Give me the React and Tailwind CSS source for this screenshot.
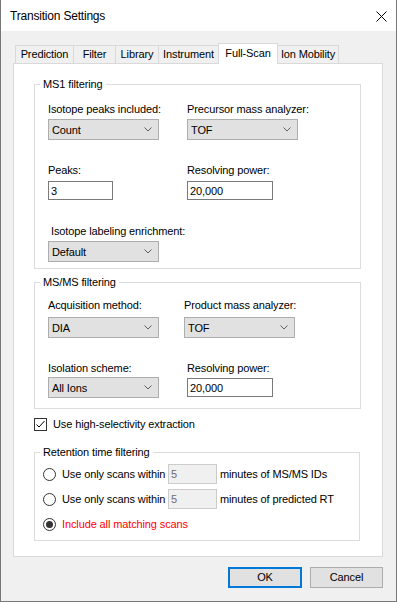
import React from "react";

function Chevron() {
  return (
    <svg width="8" height="5" viewBox="0 0 8 5" className="shrink-0">
      <polyline points="0.5,0.5 4,4 7.5,0.5" fill="none" stroke="#606060" strokeWidth="1" />
    </svg>
  );
}

function Combo({ value, w = "w-[111px]" }) {
  return (
    <div className={`${w} h-[21px] bg-[#e1e1e1] border border-[#adadad] flex items-center justify-between pl-[3px] pr-[6px]`}>
      <span className="leading-[14px]">{value}</span>
      <Chevron />
    </div>
  );
}

function TextBox({ value, w }) {
  return (
    <div className={`${w} h-[19px] bg-white border border-[#7a7a7a] flex items-center pl-[2px]`}>
      <span className="leading-[14px]">{value}</span>
    </div>
  );
}

function Label({ children, className = "" }) {
  return <div className={`h-[14px] leading-[14px] whitespace-nowrap ${className}`}>{children}</div>;
}

function Radio({ checked }) {
  return (
    <div className="w-[13px] h-[13px] rounded-full border border-[#333333] bg-white flex items-center justify-center shrink-0">
      {checked && <div className="w-[7px] h-[7px] rounded-full bg-[#333333]" />}
    </div>
  );
}

function Legend({ children }) {
  return <legend className="ml-[5px] px-[3px] h-[14px] leading-[14px]">{children}</legend>;
}

function Tab({ label, w, selected, last }) {
  if (selected) {
    return (
      <div className={`${w} h-[21px] -mb-px relative z-10 bg-white border-x border-t border-[#d9d9d9] flex items-center justify-center pb-[2px]`}>
        {label}
      </div>
    );
  }
  return (
    <div className={`${w} h-[18px] bg-[#f0f0f0] border-t ${last ? "border-r" : "border-l"} border-[#d9d9d9] flex items-center justify-center`}>
      {label}
    </div>
  );
}

export default function App() {
  return (
    <div className="w-[397px] h-[602px] bg-[#f0f0f0] border-x border-b border-[#777777] flex flex-col font-['Liberation_Sans',Arial,sans-serif] text-[11px] tracking-[-0.12px] text-black overflow-hidden">
      {/* Title bar */}
      <div className="h-[31px] bg-white flex items-center justify-between pl-[9px] pr-[9px] shrink-0">
        <span className="text-[12px] leading-[16px] mt-[1px] tracking-[-0.2px]">Transition Settings</span>
        <svg width="11" height="11" viewBox="0 0 11 11" className="mt-[1px]">
          <line x1="0.5" y1="0.5" x2="10.5" y2="10.5" stroke="#000" strokeWidth="1" />
          <line x1="10.5" y1="0.5" x2="0.5" y2="10.5" stroke="#000" strokeWidth="1" />
        </svg>
      </div>

      {/* Body */}
      <div className="pl-[12px] flex flex-col">
        {/* Tabs */}
        <div className="mt-[12px] ml-[2px] h-[20px] flex items-end">
          <Tab label="Prediction" w="w-[58px]" />
          <Tab label="Filter" w="w-[42px]" />
          <Tab label="Library" w="w-[43px]" />
          <Tab label="Instrument" w="w-[60px]" />
          <Tab label="Full-Scan" w="w-[60px]" selected />
          <Tab label="Ion Mobility" w="w-[61px]" last />
        </div>

        {/* Panel */}
        <div className="w-[370px] h-[494px] bg-white border border-[#d9d9d9] pl-[20px] pt-[13px] flex flex-col">
          {/* MS1 filtering */}
          <fieldset className="w-[327px] h-[192px] border border-[#dcdcdc]">
            <Legend>MS1 filtering</Legend>
            <div className="pl-[13px] pt-[11px] flex flex-col">
              <div className="flex">
                <div className="w-[139px] flex flex-col">
                  <Label>Isotope peaks included:</Label>
                  <div className="mt-[3px]"><Combo value="Count" /></div>
                </div>
                <div className="flex flex-col">
                  <Label>Precursor mass analyzer:</Label>
                  <div className="mt-[3px]"><Combo value="TOF" /></div>
                </div>
              </div>
              <div className="flex mt-[23px]">
                <div className="w-[139px] flex flex-col">
                  <Label>Peaks:</Label>
                  <div className="mt-[4px]"><TextBox value="3" w="w-[65px]" /></div>
                </div>
                <div className="flex flex-col">
                  <Label>Resolving power:</Label>
                  <div className="mt-[4px]"><TextBox value="20,000" w="w-[86px]" /></div>
                </div>
              </div>
              <div className="flex flex-col mt-[24px]">
                <Label className="ml-[3px]">Isotope labeling enrichment:</Label>
                <div className="mt-[3px]"><Combo value="Default" /></div>
              </div>
            </div>
          </fieldset>

          {/* MS/MS filtering */}
          <fieldset className="mt-[6px] w-[327px] h-[134px] border border-[#dcdcdc]">
            <Legend>MS/MS filtering</Legend>
            <div className="pl-[13px] pt-[9px] flex flex-col">
              <div className="flex">
                <div className="w-[136px] flex flex-col">
                  <Label>Acquisition method:</Label>
                  <div className="mt-[5px]"><Combo value="DIA" /></div>
                </div>
                <div className="flex flex-col">
                  <Label>Product mass analyzer:</Label>
                  <div className="mt-[5px]"><Combo value="TOF" /></div>
                </div>
              </div>
              <div className="flex mt-[23px]">
                <div className="w-[139px] flex flex-col">
                  <Label>Isolation scheme:</Label>
                  <div className="mt-[2px]"><Combo value="All Ions" /></div>
                </div>
                <div className="flex flex-col">
                  <Label>Resolving power:</Label>
                  <div className="mt-[3px]"><TextBox value="20,000" w="w-[86px]" /></div>
                </div>
              </div>
            </div>
          </fieldset>

          {/* Checkbox */}
          <div className="mt-[8px] h-[14px] flex items-center">
            <div className="w-[13px] h-[13px] border border-[#333333] bg-white flex items-center justify-center shrink-0">
              <svg width="11" height="11" viewBox="0 0 11 11">
                <polyline points="1.5,5.5 4,8 9.5,2" fill="none" stroke="#000" strokeWidth="1" />
              </svg>
            </div>
            <span className="ml-[6px] leading-[14px]">Use high-selectivity extraction</span>
          </div>

          {/* Retention time filtering */}
          <fieldset className="mt-[14px] w-[326px] h-[96px] border border-[#dcdcdc]">
            <Legend>Retention time filtering</Legend>
            <div className="pl-[8px] pt-[5px] flex flex-col gap-[5px]">
              <div className="h-[20px] flex items-center">
                <Radio />
                <span className="ml-[6px] w-[106px] leading-[14px] whitespace-nowrap">Use only scans within</span>
                <div className="w-[49px] h-[20px] bg-[#f0f0f0] border border-[#cccccc] flex items-center pl-[2px] text-[#6d6d6d]">5</div>
                <span className="ml-[3px] leading-[14px] whitespace-nowrap">minutes of MS/MS IDs</span>
              </div>
              <div className="h-[20px] flex items-center">
                <Radio />
                <span className="ml-[6px] w-[106px] leading-[14px] whitespace-nowrap">Use only scans within</span>
                <div className="w-[49px] h-[20px] bg-[#f0f0f0] border border-[#cccccc] flex items-center pl-[2px] text-[#6d6d6d]">5</div>
                <span className="ml-[3px] leading-[14px] whitespace-nowrap">minutes of predicted RT</span>
              </div>
              <div className="h-[20px] flex items-center">
                <Radio checked />
                <span className="ml-[6px] leading-[14px] whitespace-nowrap text-[#ff0000]">Include all matching scans</span>
              </div>
            </div>
          </fieldset>
        </div>

        {/* Buttons */}
        <div className="w-[370px] mt-[10px] flex justify-end gap-[8px]">
          <div className="w-[74px] h-[21px] bg-[#e1e1e1] border-2 border-[#0078d7] flex items-center justify-center">OK</div>
          <div className="w-[73px] h-[21px] bg-[#e1e1e1] border border-[#adadad] flex items-center justify-center">Cancel</div>
        </div>
      </div>
    </div>
  );
}
